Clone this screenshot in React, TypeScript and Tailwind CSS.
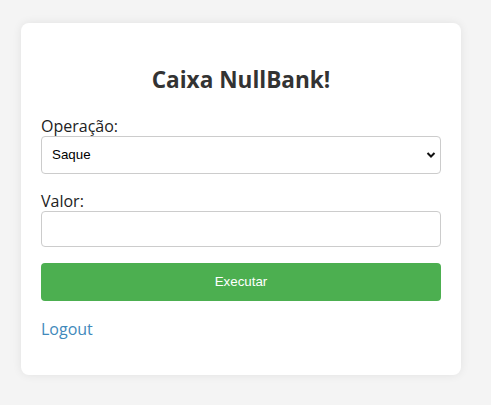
import { FC } from "react";

const App: FC = () => {
  return (
    <div className="min-h-[405px] bg-[#f4f4f4] pt-[23px] pl-[21px]" style={{ fontFamily: "'Open Sans', 'Noto Sans', sans-serif" }}>
      <div className="w-[440px] rounded-lg bg-white px-5 pt-[43px] pb-[35px] shadow-[0_0_10px_rgba(0,0,0,0.08)]">
        <h2 className="mb-[22px] text-center text-[22.6px] font-bold leading-[28px] text-[#333]">
          Caixa NullBank!
        </h2>

        <label className="block text-[16px] leading-[20px] text-[#222]">Operação:</label>
        <div className="relative">
          <select
            className="h-[38px] w-full appearance-none rounded border border-[#ccc] bg-white pl-[10px] text-[13.33px] text-black outline-none"
            style={{ fontFamily: "'Liberation Sans', Arial, sans-serif" }}
            defaultValue="saque"
          >
            <option value="saque">Saque</option>
            <option value="deposito">Depósito</option>
          </select>
          <svg
            className="pointer-events-none absolute right-[5px] top-[14px]"
            width="10"
            height="10"
            viewBox="0 0 10 10"
          >
            <path d="M1.5 3 L5 6.5 L8.5 3" fill="none" stroke="#111" strokeWidth="2" />
          </svg>
        </div>

        <label className="mt-[18px] block text-[16px] leading-[19px] text-[#222]">Valor:</label>
        <input
          type="text"
          className="h-[36px] w-full rounded border border-[#ccc] bg-white px-2 outline-none"
        />

        <button
          className="mt-[16px] h-[38px] w-full rounded bg-[#4caf50] text-[13.33px] text-white"
          style={{ fontFamily: "'Liberation Sans', Arial, sans-serif" }}
        >
          Executar
        </button>

        <a href="#" className="mt-[17px] block w-fit text-[16px] leading-[22px] text-[#4189bb]">
          Logout
        </a>
      </div>
    </div>
  );
};

export default App;
